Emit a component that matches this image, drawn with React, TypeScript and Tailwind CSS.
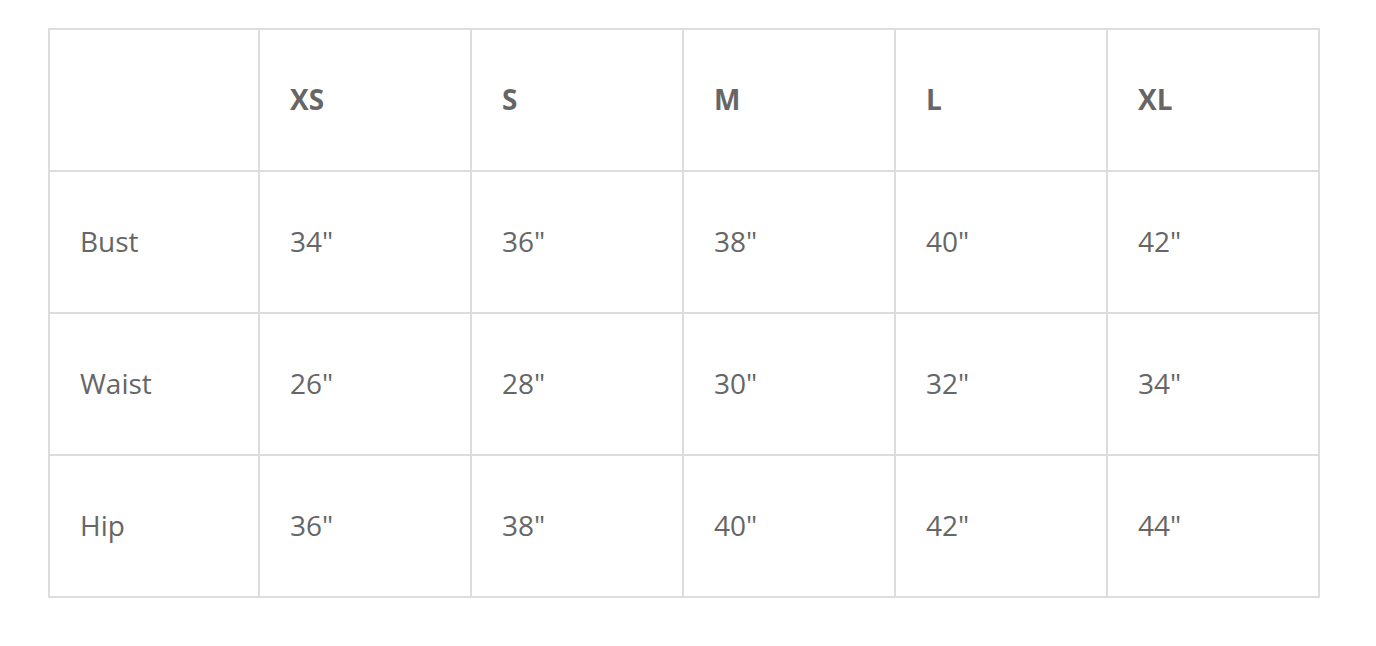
import React from "react";

const sizes = ["XS", "S", "M", "L", "XL"];
const rows: [string, string[]][] = [
  ["Bust", ['34"', '36"', '38"', '40"', '42"']],
  ["Waist", ['26"', '28"', '30"', '32"', '34"']],
  ["Hip", ['36"', '38"', '40"', '42"', '44"']],
];

export default function App() {
  return (
    <div className="w-[1376px] h-[646px] bg-white pt-[28px] pl-[48px]" style={{ fontFamily: '"Open Sans", "Noto Sans", sans-serif' }}>
      <div className="grid grid-cols-[210px_repeat(5,212px)] auto-rows-[142px] w-[1272px] border-l-2 border-t-2 border-[#dddddd] text-[28px] text-[#666666]">
        <div className="border-r-2 border-b-2 border-[#dddddd]" />
        {sizes.map((s) => (
          <div key={s} className="border-r-2 border-b-2 border-[#dddddd] flex items-center pl-[30px] pb-[3px] font-bold">
            {s}
          </div>
        ))}
        {rows.map(([label, vals]) => (
          <React.Fragment key={label}>
            <div className="border-r-2 border-b-2 border-[#dddddd] flex items-center pl-[30px] pb-[3px]">{label}</div>
            {vals.map((v, i) => (
              <div key={i} className="border-r-2 border-b-2 border-[#dddddd] flex items-center pl-[30px] pb-[3px]">
                {v}
              </div>
            ))}
          </React.Fragment>
        ))}
      </div>
    </div>
  );
}
